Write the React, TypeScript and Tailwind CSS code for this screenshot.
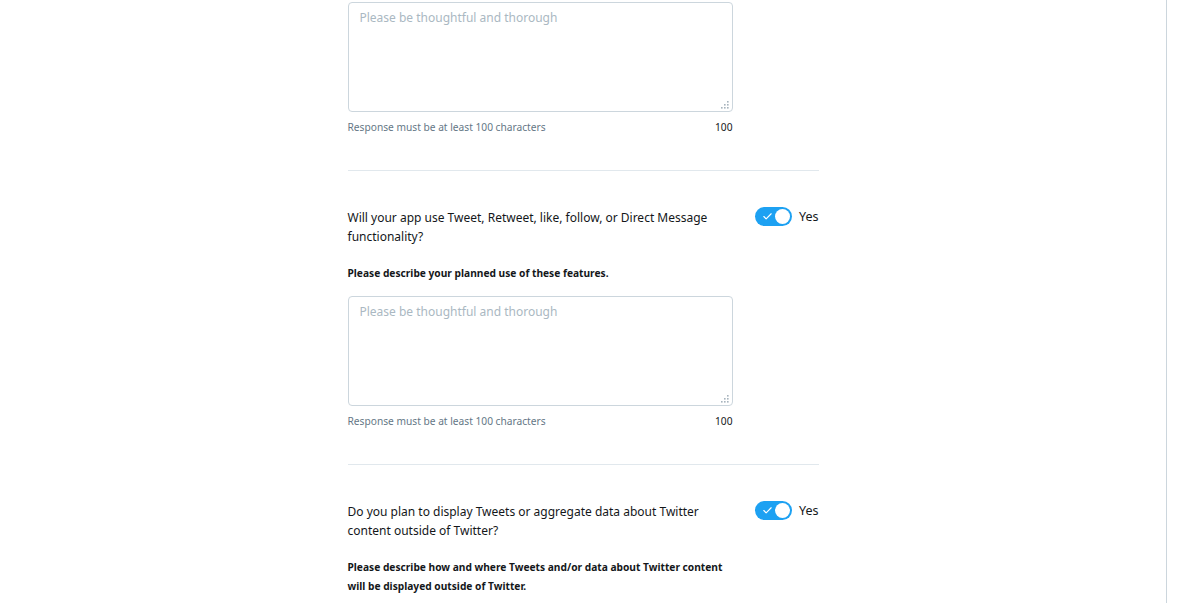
import { Check } from "lucide-react"

const FONT = "font-['Segoe_UI','Noto_Sans',sans-serif]"

function Toggle() {
    return (
        <div className="flex items-center gap-[7px] shrink-0">
            <div className="relative w-[37px] h-[19px] rounded-full bg-[#1da1f2]">
                <Check className="absolute left-[7px] top-[4px] w-[11px] h-[11px] text-white" strokeWidth={2.5} />
                <div className="absolute right-[2px] top-[2px] w-[15px] h-[15px] rounded-full bg-white" />
            </div>
            <span className="text-[12.5px] leading-[19px] text-[#14171a]">Yes</span>
        </div>
    )
}

function Grip() {
    // small dotted resize grip in the textarea corner
    const dots = [
        [6, 0],
        [6, 3],
        [3, 3],
        [6, 6],
        [3, 6],
        [0, 6],
    ]
    return (
        <svg className="absolute right-[4px] bottom-[3px] w-[8px] h-[8px]" viewBox="0 0 8 8">
            {dots.map(([x, y], i) => (
                <rect key={i} x={x} y={y} width="1.6" height="1.6" fill="#a7b4bd" />
            ))}
        </svg>
    )
}

function ResponseBox() {
    return (
        <div className="w-[385px]">
            <div className="relative">
                <textarea
                    placeholder="Please be thoughtful and thorough"
                    className="block w-full h-[110px] px-[11px] py-[5px] border border-[#ccd6dd] rounded-[4px] text-[12px] leading-[20px] text-[#14171a] placeholder:text-[#aab8c2] resize-none focus:outline-none"
                />
                <Grip />
            </div>
            <div className="flex justify-between mt-[8px] text-[10.2px] leading-[14px] text-[#657786]">
                <span>Response must be at least 100 characters</span>
                <span className="text-[#14171a]">100</span>
            </div>
        </div>
    )
}

function Question({ lines, label }: { lines: string[]; label: string }) {
    return (
        <div className="pt-[38px]">
            <div className="flex justify-between items-start">
                <p className="w-[385px] -mt-px pb-px text-[12px] leading-[19px] text-[#14171a]">
                    {lines.map((l) => (
                        <span key={l} className="block whitespace-nowrap">
                            {l}
                        </span>
                    ))}
                </p>
                <div className="mt-[-2px]">
                    <Toggle />
                </div>
            </div>
            <p className="w-[385px] mt-[17px] text-[10.2px] leading-[19px] font-bold text-[#14171a]">{label}</p>
        </div>
    )
}

export default function App() {
    return (
        <div className={`${FONT} w-[1200px] h-[603px] overflow-hidden bg-white flex`}>
            <div className="w-[1167px] h-full border-r border-[#ccd6dd]">
                <div className="w-[471px] mx-auto pt-[2px]">
                    <ResponseBox />
                    <hr className="mt-[36px] border-t border-[#e1e8ed]" />
                    <Question
                        lines={["Will your app use Tweet, Retweet, like, follow, or Direct Message", "functionality?"]}
                        label="Please describe your planned use of these features."
                    />
                    <div className="mt-[13px]">
                        <ResponseBox />
                    </div>
                    <hr className="mt-[36px] border-t border-[#e1e8ed]" />
                    <Question
                        lines={["Do you plan to display Tweets or aggregate data about Twitter", "content outside of Twitter?"]}
                        label="Please describe how and where Tweets and/or data about Twitter content will be displayed outside of Twitter."
                    />
                </div>
            </div>
        </div>
    )
}
